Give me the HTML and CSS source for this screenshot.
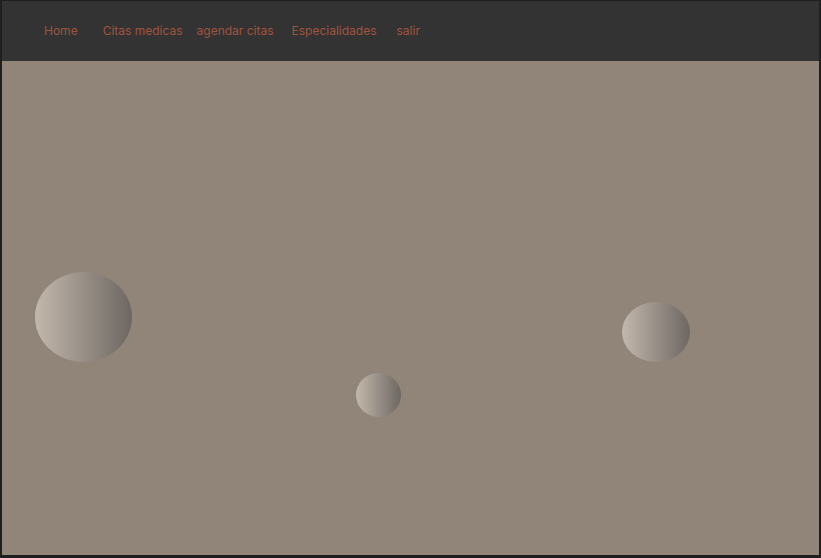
FILE: index.html
```html
<!DOCTYPE html>
<html lang="es">
<head>
<meta charset="utf-8">
<title>Citas</title>
<link rel="stylesheet" href="styles.css">
</head>
<body>
<div class="frame">
  <header class="topbar">
    <nav class="nav">
      <a class="nav-link home" href="#">Home</a>
      <a class="nav-link citas" href="#">Citas medicas</a>
      <a class="nav-link agendar" href="#">agendar citas</a>
      <a class="nav-link esp" href="#">Especialidades</a>
      <a class="nav-link salir" href="#">salir</a>
    </nav>
  </header>
  <main class="stage">
    <div class="bubble b1"></div>
    <div class="bubble b2"></div>
    <div class="bubble b3"></div>
  </main>
</div>
</body>
</html>
```
FILE: styles.css
```css
html, body {
  margin: 0;
  padding: 0;
  height: 100%;
  background: #1f1f1f;
}
.frame {
  box-sizing: border-box;
  width: 821px;
  height: 558px;
  border-style: solid;
  border-color: #1f1f1f;
  border-width: 1px 2px 3px 2px;
  display: flex;
  flex-direction: column;
}
.topbar {
  box-sizing: border-box;
  height: 60px;
  padding-bottom: 2px;
  background: #333333;
  display: flex;
  align-items: center;
  flex-shrink: 0;
}
.nav {
  display: flex;
  align-items: center;
  padding-left: 42px;
  font-family: Inter, "Noto Sans", sans-serif;
  font-size: 12px;
}
.nav-link {
  color: #a0533f;
  text-decoration: none;
}
.citas { margin-left: 25px; }
.agendar { margin-left: 14px; }
.esp { margin-left: 18px; }
.salir { margin-left: 20px; }
.stage {
  position: relative;
  flex: 1;
  background: #918479;
}
.bubble {
  position: absolute;
  border-radius: 50%;
  background: linear-gradient(to right, #c3b8ac, #6d6762);
}
.b1 { left: 33px; top: 211px; width: 97px; height: 90px; }
.b2 { left: 354px; top: 312px; width: 45px; height: 44px; }
.b3 { left: 620px; top: 241px; width: 68px; height: 60px; }
```
